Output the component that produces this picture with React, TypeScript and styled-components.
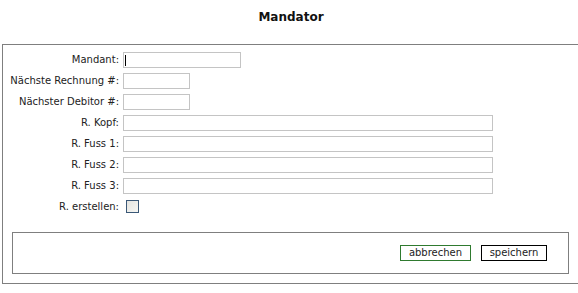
import { Fragment } from 'react';
import styled, { createGlobalStyle } from 'styled-components';

/* ─── Global ─── */
const GlobalStyle = createGlobalStyle`
  html, body {
    margin: 0;
    padding: 0;
    background: #ffffff;
  }
  body {
    font-family: 'DejaVu Sans', Verdana, sans-serif;
    font-size: 10px;
    color: #222;
  }
`;

/* ─── Data ─── */
type Field = { label: string; wide?: boolean; caret?: boolean; short?: boolean };

const fields: Field[] = [
  { label: 'Mandant:', caret: true },
  { label: 'Nächste Rechnung #:', short: true },
  { label: 'Nächster Debitor #:', short: true },
  { label: 'R. Kopf:', wide: true },
  { label: 'R. Fuss 1:', wide: true },
  { label: 'R. Fuss 2:', wide: true },
  { label: 'R. Fuss 3:', wide: true },
];

/* ─── Layout ─── */
const Page = styled.div`
  width: 578px;
  overflow: hidden;
`;

const Title = styled.h1`
  margin: 0;
  height: 44px;
  box-sizing: border-box;
  padding-top: 10px;
  padding-left: 4px;
  text-align: center;
  font-size: 12px;
  font-weight: bold;
  color: #111;
`;

const Panel = styled.div`
  margin-left: 2px;
  width: 577px;
  box-sizing: border-box;
  border: 1px solid #7f7f7f;
  padding: 7px 0 9px;
`;

const Form = styled.div`
  display: grid;
  grid-template-columns: 116px 1fr;
  column-gap: 4px;
  row-gap: 5px;
  align-items: center;
`;

const Label = styled.label`
  text-align: right;
  white-space: nowrap;
  line-height: 16px;
`;

const InputWrap = styled.div`
  position: relative;
  display: flex;
  height: 16px;
`;

const TextInput = styled.input<{ $size: 'short' | 'medium' | 'wide' }>`
  box-sizing: border-box;
  height: 16px;
  width: ${(p) => (p.$size === 'wide' ? 370 : p.$size === 'short' ? 67 : 118)}px;
  margin: 0;
  padding: 0 2px;
  border: 1px solid #c4c4c4;
  background: #fff;
  font: inherit;
  outline: none;
`;

const Caret = styled.span`
  position: absolute;
  left: 2px;
  top: 3px;
  width: 1px;
  height: 11px;
  background: #000;
`;

const CheckBox = styled.span`
  display: block;
  box-sizing: border-box;
  width: 13px;
  height: 13px;
  margin: 1px 0 0 3px;
  border: 1px solid #3b5877;
  background: linear-gradient(135deg, #e4e4e0 0%, #f6f6f3 100%);
`;

const ButtonBar = styled.div`
  margin: 17px 9px 0;
  height: 42px;
  box-sizing: border-box;
  border: 1px solid #7f7f7f;
  display: flex;
  justify-content: flex-end;
  align-items: center;
  gap: 10px;
  padding: 0 21px 0 0;
`;

const Button = styled.button<{ $primary?: boolean }>`
  box-sizing: border-box;
  height: 16px;
  width: ${(p) => (p.$primary ? 66 : 71)}px;
  margin: 0;
  padding: 0;
  background: #fff;
  border: 1px solid ${(p) => (p.$primary ? '#000' : '#2f7a2f')};
  font: inherit;
  font-size: 10px;
  color: #222;
  line-height: 14px;
  cursor: pointer;
`;

export default function App() {
  return (
    <Page>
      <GlobalStyle />
      <Title>Mandator</Title>
      <Panel>
        <Form>
          {fields.map((f) => (
            <Fragment key={f.label}>
              <Label>{f.label}</Label>
              <InputWrap>
                <TextInput $size={f.wide ? 'wide' : f.short ? 'short' : 'medium'} />
                {f.caret && <Caret />}
              </InputWrap>
            </Fragment>
          ))}
          <Label>R. erstellen:</Label>
          <InputWrap>
            <CheckBox />
          </InputWrap>
        </Form>
        <ButtonBar>
          <Button>abbrechen</Button>
          <Button $primary>speichern</Button>
        </ButtonBar>
      </Panel>
    </Page>
  );
}
